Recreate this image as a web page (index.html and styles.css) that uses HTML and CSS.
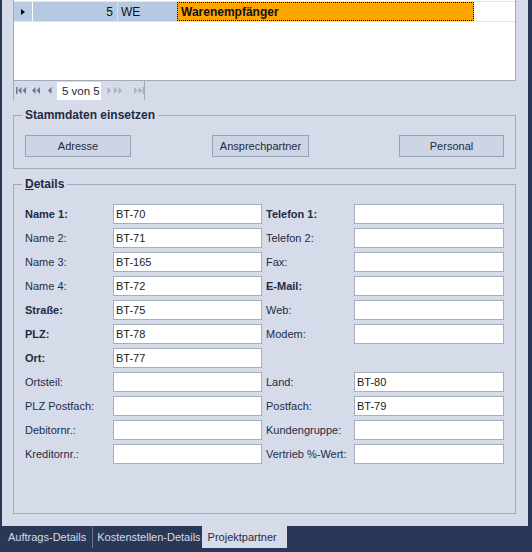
FILE: index.html
```html
<!DOCTYPE html>
<html lang="de">
<head>
<meta charset="utf-8">
<title>Projektpartner</title>
<link rel="stylesheet" href="styles.css">
</head>
<body>
<div class="frame">
  <div class="panel">
    <div class="grid">
      <div class="row">
        <div class="ind"><span class="tri"></span></div>
        <div class="cell num">5</div>
        <div class="cell code">WE</div>
        <div class="cell focus">Warenempfänger</div>
      </div>
    </div>
    <div class="nav">
      <span class="nb on"><svg width="10" height="7" viewBox="0 0 10 7"><rect x="0" y="0" width="1.5" height="7"/><polygon points="5.5,0 5.5,7 2,3.5"/><polygon points="10,0 10,7 6.5,3.5"/></svg></span>
      <span class="nb on"><svg width="9" height="7" viewBox="0 0 9 7"><polygon points="4.5,0 4.5,7 1,3.5"/><polygon points="9,0 9,7 5.5,3.5"/></svg></span>
      <span class="nb on"><svg width="5" height="7" viewBox="0 0 5 7"><polygon points="4.5,0 4.5,7 1,3.5"/></svg></span>
      <span class="pos">5 von 5</span>
      <span class="nb off"><svg width="5" height="7" viewBox="0 0 5 7"><polygon points="0.5,0 0.5,7 4,3.5"/></svg></span>
      <span class="nb off"><svg width="9" height="7" viewBox="0 0 9 7"><polygon points="0,0 0,7 3.5,3.5"/><polygon points="4.5,0 4.5,7 8,3.5"/></svg></span>
      <span class="nb off last"><svg width="10" height="7" viewBox="0 0 10 7"><polygon points="0,0 0,7 3.5,3.5"/><polygon points="4.5,0 4.5,7 8,3.5"/><rect x="8.5" y="0" width="1.5" height="7"/></svg></span>
    </div>

    <fieldset class="group stamm">
      <legend>Stammdaten einsetzen</legend>
      <div class="btns">
        <button class="btn b1">Adresse</button>
        <button class="btn b2">Ansprechpartner</button>
        <button class="btn b3">Personal</button>
      </div>
    </fieldset>

    <fieldset class="group details">
      <legend><u>D</u>etails</legend>
      <div class="form">
        <label class="l1 bold">Name 1:</label><div class="in i1">BT-70</div>
        <label class="l2 bold">Telefon 1:</label><div class="in i2"></div>

        <label class="l1">Name 2:</label><div class="in i1">BT-71</div>
        <label class="l2">Telefon 2:</label><div class="in i2"></div>

        <label class="l1">Name 3:</label><div class="in i1">BT-165</div>
        <label class="l2">Fax:</label><div class="in i2"></div>

        <label class="l1">Name 4:</label><div class="in i1">BT-72</div>
        <label class="l2 bold">E-Mail:</label><div class="in i2"></div>

        <label class="l1 bold">Straße:</label><div class="in i1">BT-75</div>
        <label class="l2">Web:</label><div class="in i2"></div>

        <label class="l1 bold">PLZ:</label><div class="in i1">BT-78</div>
        <label class="l2">Modem:</label><div class="in i2"></div>

        <label class="l1 bold">Ort:</label><div class="in i1">BT-77</div>
        <span class="l2"></span><span class="i2"></span>

        <label class="l1">Ortsteil:</label><div class="in i1"></div>
        <label class="l2">Land:</label><div class="in i2">BT-80</div>

        <label class="l1">PLZ Postfach:</label><div class="in i1"></div>
        <label class="l2">Postfach:</label><div class="in i2">BT-79</div>

        <label class="l1">Debitornr.:</label><div class="in i1"></div>
        <label class="l2">Kundengruppe:</label><div class="in i2"></div>

        <label class="l1">Kreditornr.:</label><div class="in i1"></div>
        <label class="l2">Vertrieb %-Wert:</label><div class="in i2"></div>
      </div>
    </fieldset>
  </div>
  <div class="tabs">
    <span class="tab t1">Auftrags-Details</span>
    <span class="sep"></span>
    <span class="tab t2">Kostenstellen-Details</span>
    <span class="tab active">Projektpartner</span>
  </div>
</div>
</body>
</html>
```

FILE: styles.css
```css
* { box-sizing: border-box; }
html, body { margin: 0; padding: 0; }
body {
  font-family: "Liberation Sans", Arial, sans-serif;
  font-size: 11px;
  color: #1e2b45;
  background: #293856;
}
.frame {
  width: 532px;
  height: 552px;
  background: #293856;
  display: flex;
  flex-direction: column;
  overflow: hidden;
}
.panel {
  margin: 0 4px 0 2px;
  height: 526px;
  background: #d6dbe9;
  padding: 0 12px 0 11px;
}
.grid {
  height: 81px;
  background: #fff;
  border: 1px solid #a3abbb;
  border-top: none;
  padding-top: 1px;
}
.row {
  display: flex;
  height: 21px;
  border-top: 1px solid #dfe5ee;
  border-bottom: 1px solid #dfe5ee;
}
.ind {
  width: 19px;
  background: #b9cae2;
  border-right: 1px solid #fff;
  display: flex;
  align-items: center;
  padding-left: 7px;
}
.tri {
  width: 0; height: 0;
  border-left: 4px solid #000;
  border-top: 3.5px solid transparent;
  border-bottom: 3.5px solid transparent;
}
.cell {
  display: flex;
  align-items: center;
  color: #111;
  font-size: 12px;
}
.num {
  width: 85px;
  background: #b7c9e2;
  justify-content: flex-end;
  padding-right: 4px;
  border-right: 1px solid #dde4ee;
}
.code {
  width: 59px;
  background: #b7c9e2;
  padding-left: 3px;
}
.focus {
  width: 297px;
  background: #ffa500;
  border: 1px dotted #000;
  font-weight: bold;
  padding-left: 3px;
}
.nav {
  width: 132px;
  height: 19px;
  border-left: 1px solid #a3abbb;
  border-right: 1px solid #a3abbb;
  display: flex;
  align-items: center;
  padding-left: 2px;
}
.nb { display: flex; align-items: center; }
.nb svg { display: block; }
.nb.on svg { fill: #6f7889; }
.nb.off svg { fill: #a9b0bf; }
.nav .nb:nth-child(2) { margin-left: 5px; }
.nav .nb:nth-child(3) { margin-left: 7px; }
.pos {
  margin-left: 5px;
  width: 47px;
  height: 18px;
  margin-top: 1px;
  background: #fff;
  padding-left: 5px;
  line-height: 18px;
  color: #1a2540;
  font-size: 11.5px;
}
.nav .nb:nth-child(5) { margin-left: 6px; }
.nav .nb:nth-child(6) { margin-left: 2px; }
.nav .nb.last { margin-left: 11px; }

.group {
  margin: 8px 0 0 0;
  border: 1px solid #a3abbb;
  padding: 13px 11px 11px 11px;
  min-width: 0;
}
.group legend {
  font-weight: bold;
  font-size: 12px;
  line-height: 14px;
  padding: 0 3px;
  margin-left: -3px;
  color: #1e2b45;
}
.btns { display: flex; }
.btn {
  height: 22px;
  background: #cdd4e3;
  border: 1px solid #9aa3b5;
  font-family: inherit;
  font-size: 11px;
  color: #1e2b45;
  padding: 0;
}
.b1 { width: 106px; }
.b2 { width: 97px; margin-left: 81px; }
.b3 { width: 105px; margin-left: 90px; }

.details { padding-bottom: 49px; }
.form {
  display: grid;
  grid-template-columns: 88px 149px 4px 88px 150px;
  grid-auto-rows: 20px;
  row-gap: 4px;
}
.form label, .form .l1, .form .l2 {
  display: flex;
  align-items: center;
  white-space: nowrap;
  color: #1e2b45;
}
.l1 { grid-column: 1; }
.i1 { grid-column: 2; }
.l2 { grid-column: 4; }
.i2 { grid-column: 5; }
.bold { font-weight: bold; }
.in {
  background: #fff;
  border: 1px solid #a7afbe;
  padding-left: 2px;
  display: flex;
  align-items: center;
  color: #1a1a1a;
}

.tabs {
  height: 26px;
  display: flex;
  align-items: flex-start;
  padding-left: 2px;
}
.tab {
  height: 22px;
  line-height: 22px;
  color: #d6dbe9;
  font-size: 11px;
  white-space: nowrap;
}
.t1 { padding: 0 6px; }
.sep {
  width: 1px;
  height: 21px;
  margin-top: 1px;
  background: #6b7791;
}
.t2 { padding: 0 1px 0 4px; }
.active {
  background: #d6dbe9;
  color: #1e2b45;
  width: 85px;
  padding: 0 0 0 6px;
}
```
